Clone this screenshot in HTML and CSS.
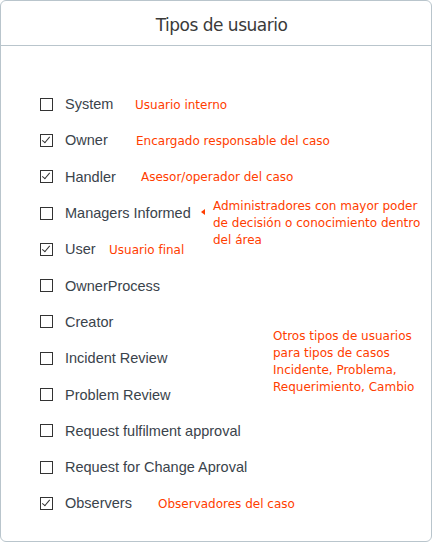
FILE: index.html
```html
<!DOCTYPE html>
<html lang="es">
<head>
<meta charset="utf-8">
<title>Tipos de usuario</title>
<link rel="stylesheet" href="styles.css">
</head>
<body>
<div class="panel">
  <div class="header">Tipos de usuario</div>
  <ul class="list">
    <li class="row"><span class="box"></span><span class="label t">System</span><span class="note n-system">Usuario interno</span></li>
    <li class="row"><span class="box checked"></span><span class="label t">Owner</span><span class="note n-owner">Encargado responsable del caso</span></li>
    <li class="row"><span class="box checked"></span><span class="label t">Handler</span><span class="note n-handler">Asesor/operador del caso</span></li>
    <li class="row"><span class="box"></span><span class="label t">Managers Informed</span><span class="note n-managers"><span class="arrow"></span>Administradores con mayor poder<br>de decisión o conocimiento dentro<br>del área</span></li>
    <li class="row"><span class="box checked"></span><span class="label t">User</span><span class="note n-user">Usuario final</span></li>
    <li class="row"><span class="box"></span><span class="label">OwnerProcess</span></li>
    <li class="row"><span class="box"></span><span class="label">Creator</span><span class="note n-otros">Otros tipos de usuarios<br>para tipos de casos<br>Incidente, Problema,<br>Requerimiento, Cambio</span></li>
    <li class="row"><span class="box"></span><span class="label">Incident Review</span></li>
    <li class="row"><span class="box"></span><span class="label">Problem Review</span></li>
    <li class="row"><span class="box"></span><span class="label">Request fulfilment approval</span></li>
    <li class="row"><span class="box"></span><span class="label">Request for Change Aproval</span></li>
    <li class="row"><span class="box checked"></span><span class="label">Observers</span><span class="note n-observers">Observadores del caso</span></li>
  </ul>
</div>
</body>
</html>
```
FILE: styles.css
```css
html, body {
  margin: 0;
  padding: 0;
  background: #ffffff;
}
body {
  width: 432px;
  height: 543px;
  font-family: "Liberation Sans", Arial, sans-serif;
}
.panel {
  box-sizing: border-box;
  width: 432px;
  height: 542px;
  border: 1px solid #b9c5cc;
  border-radius: 6px;
  background: #fff;
}
.header {
  height: 45px;
  border-bottom: 1px solid #b9c5cc;
  display: flex;
  align-items: center;
  justify-content: center;
  font-family: "DejaVu Sans", sans-serif;
  font-size: 17px;
  letter-spacing: -0.5px;
  color: #3a3a3a;
  padding: 4px 0 0 11px;
  box-sizing: border-box;
}
.list {
  list-style: none;
  margin: 0;
  padding: 40px 0 0 39px;
}
.row {
  position: relative;
  display: flex;
  align-items: center;
  height: 36.3px;
}
.box {
  box-sizing: border-box;
  width: 13px;
  height: 13px;
  border: 1px solid #333;
  background: #fff;
  position: relative;
  flex: none;
}
.box.checked::after {
  content: "";
  position: absolute;
  left: 3px;
  top: 0px;
  width: 3px;
  height: 7px;
  border-right: 1px solid #333;
  border-bottom: 1px solid #333;
  transform: rotate(40deg);
}
.label {
  margin-left: 12px;
  font-size: 14.5px;
  color: #3a434b;
}
.note {
  position: absolute;
  font-family: "DejaVu Sans", sans-serif;
  font-size: 12px;
  color: #ff3d00;
  white-space: nowrap;
  line-height: 17px;
}
.n-system, .n-owner, .n-handler, .n-user, .n-observers { margin-top: 2px; }
.n-system { left: 95px; }
.n-owner { left: 96px; }
.n-handler { left: 101px; }
.n-user { left: 69px; }
.n-observers { left: 118px; }
.n-managers { left: 173px; top: 3px; }
.n-otros { left: 233px; top: 24px; }
.arrow {
  position: absolute;
  left: -12px;
  top: 11px;
  width: 0;
  height: 0;
  border-top: 3.5px solid transparent;
  border-bottom: 3.5px solid transparent;
  border-right: 4px solid #ff3d00;
}
```
